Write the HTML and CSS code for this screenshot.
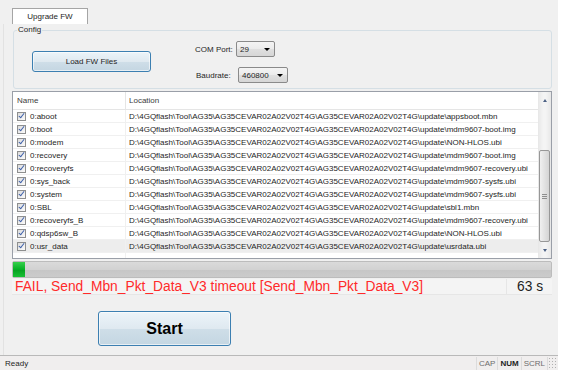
FILE: index.html
```html
<!DOCTYPE html>
<html lang="en">
<head>
    <meta charset="UTF-8">
    <title>QFlash - Upgrade FW</title>
    <link rel="stylesheet" href="styles.css">
</head>
<body>
    <div class="window">
        <!-- Tabs -->
        <div class="tabs">
            <div class="tab active">Upgrade FW</div>
        </div>

        <div class="pane">
            <!-- Config group -->
            <div class="group">
                <span class="group-title">Config</span>
                <button class="btn load-btn">Load FW Files</button>
                <div class="port-settings">
                    <div class="field">
                        <label class="label-port">COM Port:</label>
                        <div class="combo combo-port"><span>29</span><i class="arrow"></i></div>
                    </div>
                    <div class="field">
                        <label class="label-baud">Baudrate:</label>
                        <div class="combo combo-baud"><span>460800</span><i class="arrow"></i></div>
                    </div>
                </div>
            </div>

            <!-- File list -->
            <div class="list">
                <div class="table">
                    <div class="row head">
                        <div class="col-name">Name</div>
                        <div class="col-loc">Location</div>
                    </div>
                    <div class="row"><div class="col-name"><span class="chk"></span>0:aboot</div><div class="col-loc">D:\4GQflash\Tool\AG35\AG35CEVAR02A02V02T4G\AG35CEVAR02A02V02T4G\update\appsboot.mbn</div></div>
                    <div class="row"><div class="col-name"><span class="chk"></span>0:boot</div><div class="col-loc">D:\4GQflash\Tool\AG35\AG35CEVAR02A02V02T4G\AG35CEVAR02A02V02T4G\update\mdm9607-boot.img</div></div>
                    <div class="row"><div class="col-name"><span class="chk"></span>0:modem</div><div class="col-loc">D:\4GQflash\Tool\AG35\AG35CEVAR02A02V02T4G\AG35CEVAR02A02V02T4G\update\NON-HLOS.ubi</div></div>
                    <div class="row"><div class="col-name"><span class="chk"></span>0:recovery</div><div class="col-loc">D:\4GQflash\Tool\AG35\AG35CEVAR02A02V02T4G\AG35CEVAR02A02V02T4G\update\mdm9607-boot.img</div></div>
                    <div class="row"><div class="col-name"><span class="chk"></span>0:recoveryfs</div><div class="col-loc">D:\4GQflash\Tool\AG35\AG35CEVAR02A02V02T4G\AG35CEVAR02A02V02T4G\update\mdm9607-recovery.ubi</div></div>
                    <div class="row"><div class="col-name"><span class="chk"></span>0:sys_back</div><div class="col-loc">D:\4GQflash\Tool\AG35\AG35CEVAR02A02V02T4G\AG35CEVAR02A02V02T4G\update\mdm9607-sysfs.ubi</div></div>
                    <div class="row"><div class="col-name"><span class="chk"></span>0:system</div><div class="col-loc">D:\4GQflash\Tool\AG35\AG35CEVAR02A02V02T4G\AG35CEVAR02A02V02T4G\update\mdm9607-sysfs.ubi</div></div>
                    <div class="row"><div class="col-name"><span class="chk"></span>0:SBL</div><div class="col-loc">D:\4GQflash\Tool\AG35\AG35CEVAR02A02V02T4G\AG35CEVAR02A02V02T4G\update\sbl1.mbn</div></div>
                    <div class="row"><div class="col-name"><span class="chk"></span>0:recoveryfs_B</div><div class="col-loc">D:\4GQflash\Tool\AG35\AG35CEVAR02A02V02T4G\AG35CEVAR02A02V02T4G\update\mdm9607-recovery.ubi</div></div>
                    <div class="row"><div class="col-name"><span class="chk"></span>0:qdsp6sw_B</div><div class="col-loc">D:\4GQflash\Tool\AG35\AG35CEVAR02A02V02T4G\AG35CEVAR02A02V02T4G\update\NON-HLOS.ubi</div></div>
                    <div class="row selected"><div class="col-name"><span class="chk"></span>0:usr_data</div><div class="col-loc">D:\4GQflash\Tool\AG35\AG35CEVAR02A02V02T4G\AG35CEVAR02A02V02T4G\update\usrdata.ubi</div></div>
                    <div class="row filler"><div class="col-name"></div><div class="col-loc"></div></div>
                </div>
                <div class="scrollbar">
                    <div class="sb-btn"><i class="sb-up"></i></div>
                    <div class="sb-track"></div>
                    <div class="sb-thumb"><span class="grip"></span></div>
                    <div class="sb-btn"><i class="sb-down"></i></div>
                </div>
            </div>

            <!-- Progress -->
            <div class="progress">
                <div class="progress-fill" style="width: 12px;"></div>
            </div>

            <div class="message-row">
                <div class="message">FAIL, Send_Mbn_Pkt_Data_V3 timeout [Send_Mbn_Pkt_Data_V3]</div>
                <div class="elapsed">63 s</div>
            </div>

            <button class="btn start-btn">Start</button>
        </div>

        <!-- Status bar -->
        <div class="statusbar">
            <span class="status-text">Ready</span>
            <span class="indicator off">CAP</span>
            <span class="indicator on">NUM</span>
            <span class="indicator off">SCRL</span>
            <span class="size-grip"></span>
        </div>
    </div>
</body>
</html>
```

FILE: styles.css
```css
/* General */
body {
    margin: 0;
    background-color: #fff;
    font-family: 'Liberation Sans', Arial, sans-serif;
    font-size: 8px;
    color: #1e1e1e;
}

.window {
    width: 558px;
    height: 370px;
    background-color: #f0f0f0;
    display: flex;
    flex-direction: column;
}

/* Tabs */
.tabs {
    display: flex;
    padding: 8px 0 0 12px;
    height: 16px;
}

.tab {
    width: 76px;
    height: 16px;
    box-sizing: border-box;
    border: 1px solid #a5a5a5;
    border-bottom: none;
    background-color: #fff;
    text-align: center;
    line-height: 15px;
}

.pane {
    flex: 1;
    display: flex;
    flex-direction: column;
    padding: 0 6px 0 8px;
    border-left: 1px solid #e2e2e2;
    margin-left: 3px;
}

/* Config group */
.group {
    position: relative;
    margin: 6px 0 0 1px;
    height: 59px;
    box-sizing: border-box;
    border: 1px solid #d5dfe5;
    border-radius: 3px;
    display: flex;
}

.group-title {
    position: absolute;
    top: -6px;
    left: 3px;
    padding: 0 1px;
    background-color: #f0f0f0;
    line-height: 10px;
}

.btn {
    font-family: 'Liberation Sans', Arial, sans-serif;
    color: #1e1e1e;
    border: 1px solid #3c7fb1;
    border-radius: 3px;
    background: linear-gradient(#ecf4f9, #dfe9f0 50%, #cfdee8 51%, #c4d6e2);
    box-shadow: inset 0 0 0 1px rgba(255, 255, 255, 0.6);
    padding: 0;
}

.load-btn {
    width: 119px;
    height: 21px;
    margin: 20px 0 0 18px;
    font-size: 8px;
}

.port-settings {
    margin-left: 44px;
    padding-top: 10px;
    display: flex;
    flex-direction: column;
    gap: 10px;
}

.field {
    display: flex;
    align-items: center;
    gap: 1px;
    height: 16px;
}

.label-port {
    width: 40px;
}

.label-baud {
    width: 41px;
    margin-left: 1px;
}

.combo {
    height: 16px;
    box-sizing: border-box;
    border: 1px solid #8a8a8a;
    border-radius: 2px;
    background: linear-gradient(#f4f4f4, #ebebeb 50%, #dfdfdf 51%, #d6d6d6);
    display: flex;
    align-items: center;
    justify-content: space-between;
    padding: 0 4px 0 3px;
}

.combo-port {
    width: 39px;
}

.combo-baud {
    width: 50px;
}

.arrow {
    width: 0;
    height: 0;
    border-left: 3px solid transparent;
    border-right: 3px solid transparent;
    border-top: 3px solid #000;
}

/* File list */
.list {
    margin-top: 2px;
    height: 168px;
    box-sizing: border-box;
    border: 1px solid #9a9fa8;
    background-color: #fff;
    display: flex;
}

.table {
    flex: 1;
    display: flex;
    flex-direction: column;
    overflow: hidden;
}

.row {
    display: flex;
    height: 13px;
    line-height: 13px;
    border-bottom: 1px solid #f0f0f0;
    box-sizing: border-box;
    white-space: nowrap;
}

.row.head {
    height: 18px;
    line-height: 17px;
    border-bottom: 1px solid #e5e5e5;
    color: #3c3c3c;
}

.row.head .col-loc {
    border-left: 1px solid #e5e5e5;
}

.row.selected {
    background-color: #ededed;
}

.row.filler {
    flex: 1;
    border-bottom: none;
}

.col-name {
    width: 112px;
    display: flex;
    align-items: center;
    padding-left: 4px;
    box-sizing: border-box;
}

.col-loc {
    flex: 1;
    padding-left: 3px;
    border-left: 1px solid #f0f0f0;
}

.chk {
    position: relative;
    width: 9px;
    height: 9px;
    box-sizing: border-box;
    border: 1px solid #8e8f8f;
    background: linear-gradient(135deg, #dcdcdc, #fbfbfb);
    margin-right: 4px;
}

.chk::after {
    content: '';
    position: absolute;
    left: 2px;
    top: -1px;
    width: 2px;
    height: 5px;
    border: solid #3a5da8;
    border-width: 0 1.5px 1.5px 0;
    transform: rotate(38deg);
}

/* Scrollbar */
.scrollbar {
    width: 13px;
    display: flex;
    flex-direction: column;
    background: linear-gradient(90deg, #e7e7e7, #f4f4f4 40%, #f4f4f4 60%, #e7e7e7);
}

.sb-btn {
    height: 16px;
    display: flex;
    align-items: center;
    justify-content: center;
}

.sb-up,
.sb-down {
    width: 0;
    height: 0;
    border-left: 2px solid transparent;
    border-right: 2px solid transparent;
}

.sb-up {
    border-bottom: 3px solid #4d6185;
}

.sb-down {
    border-top: 3px solid #4d6185;
}

.sb-track {
    height: 42px;
}

.sb-thumb {
    flex: 1;
    margin: 0 1px;
    border: 1px solid #979797;
    border-radius: 2px;
    background: linear-gradient(90deg, #f0f0f0, #e2e2e2 50%, #d4d4d4);
    display: flex;
    align-items: center;
    justify-content: center;
}

.grip {
    width: 5px;
    height: 5px;
    background: repeating-linear-gradient(#8e8e8e 0 1px, transparent 1px 2px);
}

/* Progress */
.progress {
    margin-top: 2px;
    height: 17px;
    box-sizing: border-box;
    border: 1px solid #bcbcbc;
    border-radius: 2px;
    background: linear-gradient(#dadada, #d2d2d2 50%, #c6c6c6 51%, #cbcbcb);
    display: flex;
}

.progress-fill {
    background: linear-gradient(#37d04c, #06b025 50%, #05a020 51%, #18c034);
}

.message-row {
    margin-top: 1px;
    height: 16px;
    display: flex;
}

.message {
    flex: 1;
    padding-left: 3px;
    background-color: #f4f4f4;
    border-bottom: 1px solid #e6e6e6;
    font-size: 13.8px;
    line-height: 16px;
    color: #ff2a2a;
    white-space: nowrap;
}

.elapsed {
    width: 46px;
    box-sizing: border-box;
    border-left: 1px solid #e6e6e6;
    border-bottom: 1px solid #e6e6e6;
    background-color: #f4f4f4;
    padding-left: 10px;
    font-size: 13.8px;
    line-height: 16px;
    color: #1e1e1e;
}

.start-btn {
    margin: 16px 0 0 86px;
    width: 133px;
    height: 35px;
    font-size: 16px;
    font-weight: bold;
    color: #000;
    align-self: flex-start;
}

/* Status bar */
.statusbar {
    height: 15px;
    box-sizing: border-box;
    border-top: 1px solid #b9b9b9;
    display: flex;
    align-items: center;
    padding-left: 5px;
    background-color: #f0eeee;
}

.status-text {
    flex: 1;
}

.indicator {
    padding: 0 2px;
    border-left: 1px solid #dcdcdc;
    line-height: 13px;
}

.indicator.off {
    color: #6d6d6d;
}

.indicator.on {
    color: #1e1e1e;
    font-weight: bold;
}

.size-grip {
    width: 10px;
    height: 13px;
    border-left: 1px solid #dcdcdc;
    background: radial-gradient(circle, #b0b0b0 0.6px, transparent 0.8px) 0 0 / 3px 3px;
}
```
